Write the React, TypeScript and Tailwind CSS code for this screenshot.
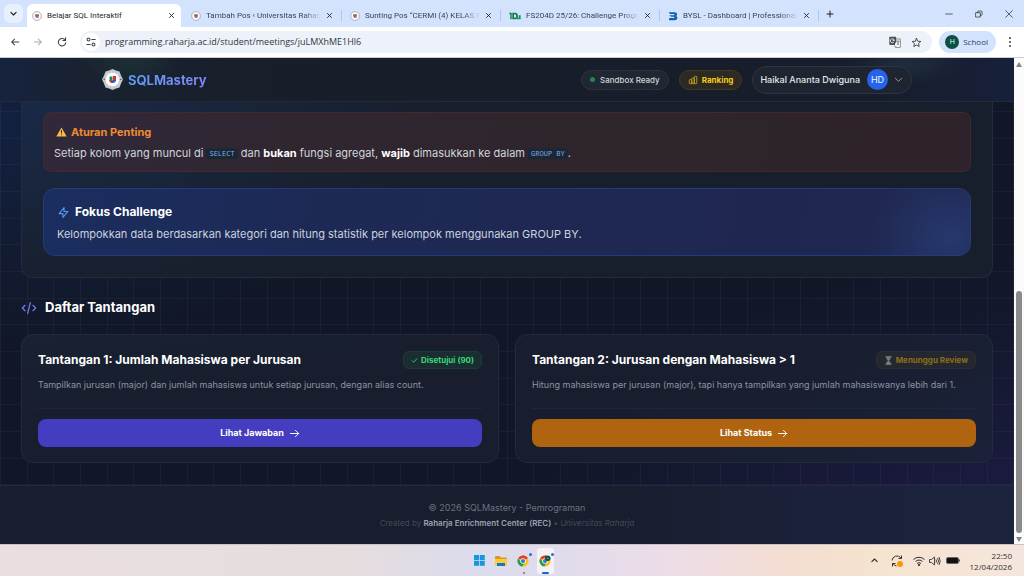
import type { ReactNode } from "react";
import { clsx } from "clsx";

type IconProps = { d: string; className: string; width?: number };

function Outline({ d, className, width = 2 }: IconProps) {
  return (
    <svg
      viewBox="0 0 24 24"
      fill="none"
      stroke="currentColor"
      strokeWidth={width}
      strokeLinecap="round"
      strokeLinejoin="round"
      className={clsx("shrink-0", className)}
      aria-hidden="true"
    >
      <path d={d} />
    </svg>
  );
}

const paths = {
  close: "M5 5l14 14M19 5L5 19",
  chevronDown: "M19 9l-7 7-7-7",
  chevronUp: "M5 15l7-7 7 7",
  bars: "M9 19v-6a2 2 0 00-2-2H5a2 2 0 00-2 2v6a2 2 0 002 2h2a2 2 0 002-2zm0 0V9a2 2 0 012-2h2a2 2 0 012 2v10m-6 0a2 2 0 002 2h2a2 2 0 002-2m0 0V5a2 2 0 012-2h2a2 2 0 012 2v14a2 2 0 01-2 2h-2a2 2 0 01-2-2z",
  bolt: "M13 10V3L4 14h7v7l9-11h-7z",
  code: "M10 20l4-16m4 4l4 4-4 4M6 16l-4-4 4-4",
  arrowRight: "M14 5l7 7m0 0l-7 7m7-7H3",
  back: "M21 12H4M11 5l-7 7 7 7",
  forward: "M3 12h17M13 5l7 7-7 7",
  star: "M12 3l2.7 6.2 6.8.6-5.1 4.5 1.5 6.6L12 17.4l-5.9 3.5 1.5-6.6-5.1-4.5 6.8-.6z",
};

function Crest({ className }: { className: string }) {
  return (
    <svg viewBox="0 0 42 42" className={clsx("shrink-0", className)} aria-hidden="true">
      <path
        d="M21 0l7 3 7 2 3 8 4 8-4 8-3 8-7 2-7 3-7-3-7-2-3-8-4-8 4-8 3-8 7-2z"
        fill="#c3c6cc"
      />
      <circle cx="21" cy="21" r="16.500" fill="#e9eaed" />
      <circle cx="21" cy="21" r="15" fill="none" stroke="#8b9099" strokeWidth="2" strokeDasharray="1.500 1.500" />
      <circle cx="21" cy="21" r="13" fill="#fff" />
      <path d="M15 15h6v9h-6z" fill="#14924f" />
      <path d="M22 14h6v10h-6z" fill="#d92e3c" />
      <path d="M14 22l7 2v4c-3 0-6-1-7-6z" fill="#d92e3c" />
      <path d="M20 23l8-1c0 4-3 6-8 6z" fill="#2456b8" />
      <circle cx="4.500" cy="21" r="1.500" fill="#4b5563" />
      <circle cx="37.500" cy="21" r="1.500" fill="#4b5563" />
    </svg>
  );
}

function SmallCrest() {
  return (
    <svg viewBox="0 0 22 22" className="size-[10px] shrink-0" aria-hidden="true">
      <circle cx="11" cy="11" r="10" fill="#e6e6ea" stroke="#a9abb3" strokeWidth="1.500" />
      <circle cx="11" cy="11" r="7" fill="#fff" />
      <path d="M7 7h4v4H7z" fill="#3f8c62" />
      <path d="M11 7h4v5h-4z" fill="#d5404c" />
      <path d="M7 11h4v4H9z" fill="#d5404c" />
      <path d="M11 12h4l-1 3h-3z" fill="#3b62b4" />
    </svg>
  );
}

function SheetIcon() {
  return (
    <svg viewBox="0 0 36 24" className="h-2 w-3 shrink-0" aria-hidden="true">
      <path d="M1 2h7v20H4V7H1zM10 2h7a9 9 0 010 20h-7zm5 5v10h2a5 5 0 000-10z" fill="#0b7a45" />
      <path d="M22 10h5v8h2v-8h6v12H22z" fill="#13975a" />
    </svg>
  );
}

function BIcon() {
  return (
    <svg viewBox="0 0 26 26" className="size-[10px] shrink-0" aria-hidden="true">
      <path
        d="M2 3h15c8 0 8 8 4 10 5 2 5 11-4 11H3v-6h12c3 0 3-3 0-3H8l-5-4h12c3 0 3-3 0-3H5z"
        fill="#1460a8"
      />
    </svg>
  );
}

function Chrome({ className, badge = false }: { className: string; badge?: boolean }) {
  return (
    <svg viewBox="0 0 48 48" className={clsx("shrink-0", className)} aria-hidden="true">
      <circle cx="24" cy="24" r="22" fill="#fbc116" />
      <path d="M24 24L5 13A22 22 0 0143 13z" fill="#e33b2e" />
      <path d="M24 24H13L5 13a22 22 0 0016 33l9-15z" fill="#24a148" />
      <path d="M24 13h19A22 22 0 0024 2z" fill="#e33b2e" />
      <circle cx="24" cy="24" r="11" fill="#fff" />
      <circle cx="24" cy="24" r="8.500" fill="#2f7de1" />
      {badge && <circle cx="35" cy="13" r="11" fill="#0c4f43" />}
      {badge && <path d="M31 13h8" stroke="#fff" strokeWidth="2" />}
    </svg>
  );
}

type Tab = { title: string; icon: ReactNode; active?: boolean };

const tabs: Tab[] = [
  { title: "Belajar SQL Interaktif", icon: <SmallCrest />, active: true },
  { title: "Tambah Pos ‹ Universitas Raharj", icon: <SmallCrest /> },
  { title: "Sunting Pos “CERMI (4) KELAS P", icon: <SmallCrest /> },
  { title: "FS204D 25/26: Challenge Progra", icon: <SheetIcon /> },
  { title: "BYSL - Dashboard | Professional", icon: <BIcon /> },
];

function TabStrip() {
  return (
    <div className="flex h-[27px] items-stretch bg-[#d3e3fd] pl-1 text-[#1f1f1f]">
      <button aria-label="Cari tab" className="my-1 flex w-[19px] items-center justify-center rounded-md bg-[#e9f0fd]">
        <Outline d={paths.chevronDown} className="size-[9px]" width={3} />
      </button>
      <div role="tablist" className="ml-1 flex min-w-0 items-stretch">
        {tabs.map((tab) => (
          <div
            key={tab.title}
            className={clsx("flex w-[159px] min-w-0 items-center pt-1", tab.active ? "pr-[5px]" : "pr-2 pl-[5px]")}
          >
            <div
              className={clsx(
                "flex h-full min-w-0 flex-1 items-center gap-[5px]",
                tab.active && "rounded-t-md bg-white pr-[6px] pl-[5px]",
              )}
            >
              {tab.icon}
              <button
                role="tab"
                aria-selected={!!tab.active}
                className={clsx(
                  "min-w-0 flex-1 text-left font-['Roboto','Open_Sans',sans-serif] text-[8px] leading-3 whitespace-nowrap",
                  tab.active ? "text-[#1f1f1f]" : "mask-r-from-85% text-[#3c4454]",
                )}
              >
                {tab.title}
              </button>
              <button aria-label={`Tutup ${tab.title}`}>
                <Outline d={paths.close} className="size-[7px]" width={3} />
              </button>
            </div>
            {!tab.active && <span className="-mr-[5px] ml-2 h-[11px] w-px shrink-0 bg-[#a8c7fa]" />}
          </div>
        ))}
      </div>
      <button aria-label="Tab baru" className="ml-[2px] flex w-3 items-center justify-center">
        <Outline d="M12 3v18M3 12h18" className="size-2" width={3} />
      </button>
      <div className="ml-auto flex items-center gap-[22px] pr-[11px]">
        <button aria-label="Kecilkan">
          <Outline d="M2 12h20" className="size-2" />
        </button>
        <button aria-label="Pulihkan">
          <Outline d="M3 8h13v13H3zM8 8V5a2 2 0 012-2h9a2 2 0 012 2v9a2 2 0 01-2 2h-3" className="size-2" />
        </button>
        <button aria-label="Tutup">
          <Outline d="M2 2l20 20M22 2L2 22" className="size-2" />
        </button>
      </div>
    </div>
  );
}

function AddressBar() {
  return (
    <div className="flex h-[31px] items-center border-b border-[#c9ced6] bg-white pr-3 pl-[9px] text-[#3c4043]">
      <button aria-label="Kembali" className="p-px">
        <Outline d={paths.back} className="size-[10px]" width={2.5} />
      </button>
      <button aria-label="Maju" className="ml-[11px] p-px text-[#a7aaae]">
        <Outline d={paths.forward} className="size-[10px]" width={2.5} />
      </button>
      <button aria-label="Muat ulang" className="ml-3 p-px">
        <Outline d="M20 8a9 9 0 10 1 6M20.500 2v6.500H14" className="size-[10px]" width={2.5} />
      </button>
      <div className="ml-3 flex h-[22px] min-w-0 flex-1 items-center rounded-full bg-[#edf2fa] pr-[10px] pl-[2px]">
        <button aria-label="Info situs" className="flex size-[18px] items-center justify-center rounded-full bg-white">
          <svg viewBox="0 0 24 24" className="size-[10px]" fill="none" stroke="currentColor" strokeWidth="2.500">
            <circle cx="6" cy="6" r="3.500" />
            <path d="M13 6h10M1 18h10" />
            <circle cx="18" cy="18" r="3.500" />
          </svg>
        </button>
        <input
          aria-label="Alamat"
          readOnly
          value="programming.raharja.ac.id/student/meetings/juLMXhME1Hl6"
          className="ml-[5px] min-w-0 flex-1 bg-transparent text-[9px] leading-3 text-[#33363b] outline-none"
        />
        <button aria-label="Terjemahkan">
          <svg viewBox="0 0 36 36" className="size-[12px]" aria-hidden="true">
            <path d="M1 2h20l5 25H4a3 3 0 01-3-3z" fill="#4a4d51" />
            <path d="M16 14a6 6 0 10-2 5M16 14h-5" fill="none" stroke="#fff" strokeWidth="2.500" />
            <path d="M24 9h9a2 2 0 012 2v21a2 2 0 01-2 2H19l-2-6" fill="#fff" stroke="#4a4d51" strokeWidth="2" />
            <path d="M22 16h10M27 13v3M30 17c-1 5-4 8-7 10M24 19c1 4 4 7 7 8" fill="none" stroke="#4a4d51" strokeWidth="2" />
          </svg>
        </button>
        <button aria-label="Tandai halaman" className="ml-[10px]">
          <Outline d={paths.star} className="size-[11px]" width={2} />
        </button>
      </div>
      <button className="ml-[7px] flex h-[22px] items-center gap-1 rounded-full bg-[#d3e3fd] pr-2 pl-[6px] text-[8px] text-[#28426b]">
        <span className="flex size-[14px] items-center justify-center rounded-full bg-[#0c4f43] text-[7px] text-white">
          H
        </span>
        School
      </button>
      <button aria-label="Menu" className="ml-3 flex w-[4px] flex-col items-center gap-[2px]">
        <span className="size-[2px] rounded-full bg-[#3c4043]" />
        <span className="size-[2px] rounded-full bg-[#3c4043]" />
        <span className="size-[2px] rounded-full bg-[#3c4043]" />
      </button>
    </div>
  );
}

function SiteNav() {
  return (
    <header className="border-b border-[#232b3a] bg-[radial-gradient(50px_22px_at_130px_4px,#1c3036,transparent),radial-gradient(60px_20px_at_905px_6px,#202d3c,transparent),linear-gradient(90deg,#16233f,#192230_9%,#181e2a_25%,#171d2a_85%,#17203a)]">
      <div className="mx-auto flex h-[43px] max-w-[810px] items-center">
        <a href="#beranda" className="flex items-center gap-[5px]">
          <Crest className="size-[21px]" />
          <span className="bg-gradient-to-r from-[#5b9cf5] to-[#7f86f3] bg-clip-text text-[13px] leading-5 font-bold text-transparent">
            SQLMastery
          </span>
        </a>
        <span className="ml-auto flex h-5 items-center gap-[5px] rounded-full border border-[#2b3341] bg-[#202733] px-2 text-[8px] font-medium text-[#d1d5db]">
          <span className="size-[5px] rounded-full bg-[#21874a]" />
          Sandbox Ready
        </span>
        <a
          href="#ranking"
          className="ml-[10px] flex h-5 items-center gap-1 rounded-full border border-[#423a1f] bg-[#2c2a25] px-2 text-[8px] font-bold text-[#facc15]"
        >
          <Outline d={paths.bars} className="size-[10px] text-[#d0a91a]" />
          Ranking
        </a>
        <button className="ml-[10px] flex h-7 items-center rounded-full border border-[#2d3543] bg-[#1e2530] px-[7px] text-[9px] font-medium text-[#e5e7eb]">
          Haikal Ananta Dwiguna
          <span className="ml-[7px] flex size-[21px] items-center justify-center rounded-full bg-[#2563eb] text-[9px] text-[#dbe6fd]">
            HD
          </span>
          <Outline d={paths.chevronDown} className="ml-[5px] size-[11px] text-[#9ca3af]" />
        </button>
      </div>
    </header>
  );
}

function Code({ children }: { children: ReactNode }) {
  return (
    <code className="rounded-[3px] bg-[#1c2735] px-[3px] py-px align-middle font-['Noto_Sans_Mono','DejaVu_Sans_Mono',monospace] text-[7px] leading-3 text-[#78afe8]">
      {children}
    </code>
  );
}

function LessonPanel() {
  return (
    <section className="rounded-b-xl border border-t-0 border-[#222c3c] bg-[#181f2c] bg-[radial-gradient(420px_200px_at_0_0,#192a47,transparent)] px-[21px] pt-[10px] pb-[21px]">
      <div className="rounded-lg border border-[#44292b] bg-[linear-gradient(100deg,#31293a,#2f262f_30%,#2e232a)] px-[10px] pt-[10px] pb-2">
        <h3 className="flex h-[18px] items-center gap-1 pl-[2px] text-[11px] font-bold text-[#f08a34]">
          <svg viewBox="0 0 36 32" className="h-[10px] w-[11px] shrink-0" aria-hidden="true">
            <path d="M18 1l17 30H1z" fill="#fbb94c" />
            <path d="M16 10h4l-1 12h-2zM16.500 24h3v3h-3z" fill="#33261a" />
          </svg>
          Aturan Penting
        </h3>
        <p className="mt-[2px] text-[11px] leading-5 text-[#d1d5db]">
          Setiap kolom yang muncul di <Code>SELECT</Code> dan <strong className="font-bold text-white">bukan</strong>{" "}
          fungsi agregat, <strong className="font-bold text-white">wajib</strong> dimasukkan ke dalam{" "}
          <Code>GROUP BY</Code>.
        </p>
      </div>
      <div className="mt-4 rounded-xl border border-[#233b78] bg-[radial-gradient(85px_75px_at_calc(100%_-_20px)_48px,#26386d,#26386d88_45%,transparent),linear-gradient(100deg,#1b2e5f,#1d2955_30%,#20264f)] px-[13px] pt-[13px] pb-[11px]">
        <h3 className="flex h-5 items-center gap-[5px] text-[12px] font-bold text-white">
          <Outline d={paths.bolt} className="size-[13px] text-[#4f9bf5]" />
          Fokus Challenge
        </h3>
        <p className="mt-[2px] text-[11px] leading-5 text-[#cbd2de]">
          Kelompokkan data berdasarkan kategori dan hitung statistik per kelompok menggunakan GROUP BY.
        </p>
      </div>
    </section>
  );
}

type Challenge = {
  title: string;
  text: string;
  action: string;
  status: string;
  tone: "approved" | "waiting";
};

const challenges: Challenge[] = [
  {
    title: "Tantangan 1: Jumlah Mahasiswa per Jurusan",
    text: "Tampilkan jurusan (major) dan jumlah mahasiswa untuk setiap jurusan, dengan alias count.",
    action: "Lihat Jawaban",
    status: "Disetujui (90)",
    tone: "approved",
  },
  {
    title: "Tantangan 2: Jurusan dengan Mahasiswa > 1",
    text: "Hitung mahasiswa per jurusan (major), tapi hanya tampilkan yang jumlah mahasiswanya lebih dari 1.",
    action: "Lihat Status",
    status: "Menunggu Review",
    tone: "waiting",
  },
];

function ChallengeCard({ item }: { item: Challenge }) {
  const approved = item.tone === "approved";
  return (
    <article
      className={clsx(
        "rounded-xl border border-[#222b3a] p-4 pb-[15px]",
        approved
          ? "bg-[linear-gradient(170deg,#182232,#181e2d_40%)]"
          : "bg-[linear-gradient(150deg,#181e2d_30%,#1b2138)]",
      )}
    >
      <div className="flex items-start justify-between">
        <h3 className="pt-[1px] text-[12px] leading-4 font-bold text-white">{item.title}</h3>
        <span
          className={clsx(
            "flex h-[18px] shrink-0 items-center gap-[3px] rounded-md border px-[7px] text-[8px] font-bold",
            approved
              ? "border-[#1c3b37] bg-[#1a2d33] text-[#3dd674]"
              : "border-[#2c2c32] bg-[#24272f] text-[#8b6f1c]",
          )}
        >
          {approved ? (
            <Outline d="M4 13l5 5L20 6" className="size-[7px]" width={3} />
          ) : (
            <svg viewBox="0 0 24 30" className="h-[9px] w-[9px]" aria-hidden="true">
              <path d="M4 4h16c0 6-4 8-6 11 2 3 6 5 6 11H4c0-6 4-8 6-11-2-3-6-5-6-11z" fill="#5b7487" />
              <path d="M7 8h10l-5 5zM12 19l6 7H6z" fill="#a98745" />
              <path d="M2 1h20v4H2zM2 25h20v4H2z" fill="#82858b" />
            </svg>
          )}
          {item.status}
        </span>
      </div>
      <p className="mt-2 border-b border-[#1f2736] pb-[15px] text-[9px] leading-4 text-[#8b93a1]">{item.text}</p>
      <a
        href="#tantangan"
        className={clsx(
          "mt-[10px] flex h-7 items-center justify-center gap-[5px] rounded-lg text-[9px] font-bold text-white",
          approved ? "bg-[#443dc0]" : "bg-[#b1640f]",
        )}
      >
        {item.action}
        <Outline d={paths.arrowRight} className="size-[11px]" />
      </a>
    </article>
  );
}

function SiteFooter() {
  return (
    <footer className="mt-auto border-t border-[#222a3b] bg-[linear-gradient(90deg,#181e2d_60%,#1c213b_80%,#1b233d)] pt-[14px] pb-[14px] text-center">
      <p className="text-[9px] leading-4 text-[#6b7280]">© 2026 SQLMastery - Pemrograman</p>
      <p className="text-[8px] leading-[14px] text-[#414a59]">
        Created by <strong className="font-semibold text-[#9ca3af]">Raharja Enrichment Center (REC)</strong> •{" "}
        <em>Universitas Raharja</em>
      </p>
    </footer>
  );
}

function Scrollbar() {
  return (
    <div aria-hidden="true" className="flex w-[10px] shrink-0 flex-col items-center bg-[#fbfbfb] pt-1 pb-[2px]">
      <svg viewBox="0 0 6 5" className="h-[5px] w-[6px]">
        <path d="M3 0l3 5H0z" fill="#858585" />
      </svg>
      <div className="flex-[224]" />
      <div className="w-[6px] flex-[242] rounded-full bg-[#8a8a8a]" />
      <svg viewBox="0 0 6 5" className="mt-1 h-[5px] w-[6px]">
        <path d="M3 5l3-5H0z" fill="#858585" />
      </svg>
    </div>
  );
}

function Taskbar() {
  return (
    <div className="grid h-8 grid-cols-[1fr_auto_1fr] items-center border-t border-[#c9c3c6] bg-[linear-gradient(90deg,#e9dfdf,#e6dddf_35%,#dcdcec_45%,#dfdcec_54%,#ecdce8_65%,#f3ddd2_76%,#f5e4cf_86%,#f6e5dd)] text-[#333]">
      <span />
      <div className="flex items-center gap-[5px]">
        <button aria-label="Mulai" className="flex h-[26px] w-[17px] items-center justify-center">
          <svg viewBox="0 0 22 22" className="size-[11px]">
            <path d="M0 0h10v10H0zM11.500 0h10v10h-10zM0 11.500h10v10H0zM11.500 11.500h10v10h-10z" fill="#1597e0" />
          </svg>
        </button>
        <button aria-label="File Explorer" className="flex h-[26px] w-[17px] items-center justify-center">
          <svg viewBox="0 0 24 20" className="h-[10px] w-[12px]">
            <path d="M0 2a2 2 0 012-2h7l3 3h10a2 2 0 012 2v3H0z" fill="#dc9a1c" />
            <path d="M0 6h24v12a2 2 0 01-2 2H2a2 2 0 01-2-2z" fill="#fccb3d" />
            <path d="M4 14h16v6H4z" fill="#1478c8" />
          </svg>
        </button>
        <button aria-label="Chrome" className="relative flex h-[26px] w-[17px] items-center justify-center">
          <Chrome className="size-[12px]" />
          <span className="absolute top-[5px] right-0 size-[3px] rounded-full bg-[#1976d2]" />
          <span className="absolute bottom-0 left-2 size-[2px] rounded-full bg-[#77737a]" />
        </button>
        <button
          aria-label="Chrome School"
          className="relative flex h-[26px] w-[17px] items-center justify-center rounded-[3px] bg-[#f5f1f7]"
        >
          <Chrome className="size-[12px]" badge />
          <span className="absolute top-[5px] right-0 size-[3px] rounded-full bg-[#1976d2]" />
          <span className="absolute bottom-0 left-[5px] h-[2px] w-[7px] rounded-full bg-[#0b6fc4]" />
        </button>
      </div>
      <div className="flex items-center justify-end pr-3">
        <Outline d={paths.chevronUp} className="size-[9px]" width={3} />
        <svg viewBox="0 0 24 24" className="ml-3 size-[12px]" fill="none" stroke="currentColor" strokeWidth="2">
          <path d="M2 11a10 10 0 0118-5M21 1v6h-6M3 23v-6h6M4 17a10 10 0 007 5" />
          <circle cx="18" cy="18" r="6" fill="#f8980c" stroke="none" />
        </svg>
        <svg viewBox="0 0 24 20" className="ml-[10px] h-[10px] w-3" fill="none" stroke="currentColor" strokeWidth="2">
          <path d="M1 7a16 16 0 0122 0M5 11a10 10 0 0114 0M8 15a6 6 0 018 0" />
          <circle cx="12" cy="18" r="1.500" fill="currentColor" />
        </svg>
        <svg viewBox="0 0 24 20" className="ml-1 h-[10px] w-3" fill="none" stroke="currentColor" strokeWidth="1.800">
          <path d="M1 7h4l6-5v16l-6-5H1zM14 7q2 3 0 6M17 4q4 6 0 12M20 2q5 8 0 16" />
        </svg>
        <svg viewBox="0 0 28 14" className="ml-[5px] h-[7px] w-[14px]">
          <rect x="1" y="1" width="24" height="12" rx="3" fill="#111" stroke="#666" strokeWidth="2" />
          <path d="M27 5v4" stroke="#444" strokeWidth="2" />
        </svg>
        <div className="ml-[10px] text-right text-[8px] leading-[11px]">
          <div>22:50</div>
          <div>12/04/2026</div>
        </div>
      </div>
    </div>
  );
}

export default function App() {
  return (
    <div className="flex min-h-screen flex-col font-['Open_Sans','Noto_Sans',sans-serif]">
      <TabStrip />
      <AddressBar />
      <div className="flex flex-1 items-stretch">
        <div className="flex min-w-0 flex-1 flex-col bg-[#111726] bg-[radial-gradient(420px_230px_at_0px_70px,#14275390,transparent),radial-gradient(520px_300px_at_100%_100%,#211d52b0,transparent)] font-['Inter',sans-serif]">
          <SiteNav />
          <div className="flex flex-1 flex-col bg-[linear-gradient(90deg,#ffffff09_1px,transparent_1px,transparent_27px,#ffffff09_27px,#ffffff09_28px,transparent_28px,transparent_53px,#ffffff09_53px,#ffffff09_54px,transparent_54px),linear-gradient(#ffffff09_1px,transparent_1px,transparent_27px,#ffffff09_27px,#ffffff09_28px,transparent_28px,transparent_53px,#ffffff09_53px,#ffffff09_54px,transparent_54px)] bg-[size:80px_80px] bg-[position:0px_9px]">
            <main className="px-[21px] pb-[22px]">
              <LessonPanel />
              <h2 className="mt-5 flex h-5 items-center gap-2 text-[13px] font-bold text-white">
                <Outline d={paths.code} className="size-4 text-[#7078e8]" />
                Daftar Tantangan
              </h2>
              <div className="mt-4 grid grid-cols-2 gap-4">
                {challenges.map((item) => (
                  <ChallengeCard key={item.title} item={item} />
                ))}
              </div>
            </main>
            <SiteFooter />
          </div>
        </div>
        <Scrollbar />
      </div>
      <Taskbar />
    </div>
  );
}
